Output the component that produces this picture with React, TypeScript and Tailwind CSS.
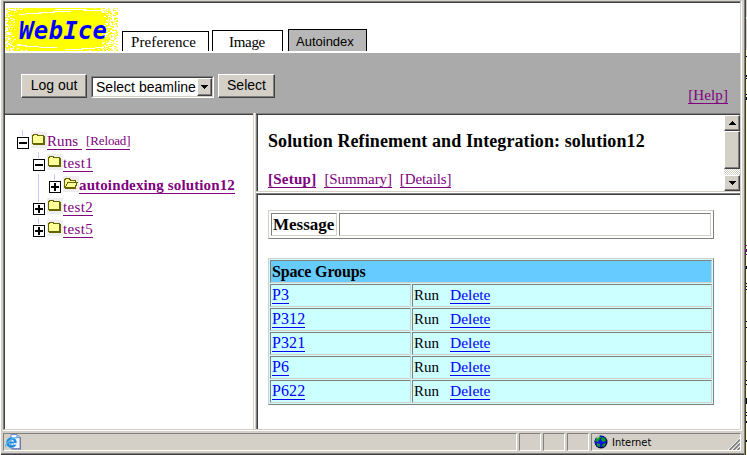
import React from "react";

const serif = "font-['Liberation_Serif',serif]";
const sans = "font-['Liberation_Sans',sans-serif]";

const edgeMarks = [
  { y: 56, h: 1, c: "#000" }, { y: 75, h: 2, c: "#000" }, { y: 78, h: 1, c: "#000" },
  { y: 94, h: 1, c: "#000" }, { y: 97, h: 3, c: "#000" },
  { y: 245, h: 1, c: "#800080" }, { y: 249, h: 3, c: "#800080" }, { y: 254, h: 1, c: "#800080" },
  { y: 266, h: 3, c: "#000" }, { y: 283, h: 1, c: "#000" }, { y: 286, h: 1, c: "#000" },
  { y: 289, h: 1, c: "#000" }, { y: 321, h: 1, c: "#000" }, { y: 327, h: 1, c: "#000" },
  { y: 361, h: 1, c: "#000" }, { y: 380, h: 1, c: "#000" }, { y: 384, h: 1, c: "#000" },
  { y: 398, h: 6, c: "#000" }, { y: 412, h: 1, c: "#000" }, { y: 415, h: 1, c: "#000" },
  { y: 421, h: 2, c: "#000" }, { y: 440, h: 2, c: "#000" },
];

function speckles() {
  let seed = 7;
  const rnd = () => {
    seed = (seed * 16807) % 2147483647;
    return seed / 2147483647;
  };
  const out: { x: number; y: number; w: number }[] = [];
  for (let y = 0; y < 43; y++) {
    for (let x = 0; x < 113; x++) {
      const nx = Math.abs(x - 53) / 58;
      const ny = Math.abs(y - 21) / 22;
      const r = Math.pow(nx, 5) + Math.pow(ny, 8) * 0.3;
      if (r > 0.25 && rnd() < Math.min(0.62, r * 0.8)) out.push({ x, y, w: rnd() > 0.7 ? 2 : 1 });
    }
  }
  return out;
}
const dots = speckles();

function Logo() {
  return (
    <svg width="113" height="43" viewBox="0 0 113 43" shapeRendering="crispEdges" className="mt-[5px] shrink-0">
      <rect width="113" height="43" fill="#ff0" />
      {dots.map((d, i) => <rect key={i} x={d.x} y={d.y} width={d.w} height="1" fill="#fff" />)}
      <path d="M14 6h6V5h14V4h14V3h18v1H50v1H36v1H20v1h-6zM50 1h32v1h14v1H78V2H50zM12 36h4v1h6v1h12v1h18v1H34v-1H20v-1h-8zM60 41h16v-1h14v-1h8v1h-8v1H78v1H60z" fill="#fff" />
      <text x="14" y="31" fill="#00f" fontSize="24" fontWeight="700" fontStyle="italic" fontFamily="'DejaVu Sans Mono', monospace" textLength="88">WebIce</text>
    </svg>
  );
}

function Folder({ open }: { open?: boolean }) {
  return (
    <svg width="16" height="16" viewBox="0 0 16 16" className="ml-[2px] mt-[2px] shrink-0" shapeRendering="crispEdges">
      <rect width="16" height="16" fill="#eeeeee" />
      {open ? (
        <>
          <path d="M1 3h1V2h5v1h1v1h5v2h2v1h-1v3h-1v3H2v-1H1z" fill="#666600" />
          <path d="M2 4h1V3h3v1h1v1h5v1H4v2H3v2H2z" fill="#ffff99" />
          <path d="M5 7h8v2h-1v2H3v-1h1V8h1z" fill="#ffff99" />
        </>
      ) : (
        <>
          <path d="M1 3h1V2h5v1h6v1h1v9H2v-1H1z" fill="#666600" />
          <path d="M2 4h1V3h3v1h6v7H2z" fill="#ffff99" />
        </>
      )}
    </svg>
  );
}

function TreeRow({ guides, open, plus, children }: { guides: boolean[]; open?: boolean; plus?: boolean; children: React.ReactNode }) {
  return (
    <div className="flex h-[22px] pl-[12px]">
      {guides.map((g, i) => (
        <div key={i} className="w-[16px] shrink-0 pl-[5px]">
          {g && <div className="h-full w-px bg-[#c8c8ff]" />}
        </div>
      ))}
      <div className="w-[12px] shrink-0">
        <div className="ml-[5px] h-[6px] w-px bg-[#c8c8ff]" />
        <svg width="12" height="12" viewBox="0 0 12 12" className="mt-px" shapeRendering="crispEdges">
          <rect width="12" height="12" fill="#000" />
          <rect x="1" y="1" width="10" height="10" fill="#fff" />
          <path d={plus ? "M2 5h3V2h2v3h3v2H7v3H5V7H2z" : "M2 5h8v2H2z"} fill="#000" />
        </svg>
      </div>
      <Folder open={open} />
      <div className="flex items-start whitespace-pre pt-[3px] leading-[18px] text-[#800080]">{children}</div>
    </div>
  );
}

const u = "border-b border-current leading-[16px] h-[17px] whitespace-pre";
const raised = "border border-t-white border-l-white border-r-[#404040] border-b-[#404040] bg-[#d4d0c8]";
const sunk = "border border-t-[#808080] border-l-[#808080] border-r-[#d4d0c8] border-b-[#d4d0c8]";
const panel = "h-[18px] border border-t-[#808080] border-l-[#808080] border-r-white border-b-white";

function Arrow({ up }: { up?: boolean }) {
  return (
    <svg width="7" height="4" viewBox="0 0 7 4" shapeRendering="crispEdges">
      <path d={up ? "M3 0h1v1h1v1h1v1h1v1H0V3h1V2h1V1h1z" : "M0 0h7v1H6v1H5v1H4v1H3V3H2V2H1V1H0z"} />
    </svg>
  );
}

function Button({ children, className }: { children: React.ReactNode; className: string }) {
  return (
    <button className={`${raised} ${className} h-[24px] shadow-[inset_-1px_-1px_0_#808080] ${sans} text-[14px] leading-[21px] flex justify-center`}>
      {children}
    </button>
  );
}

function Header() {
  return (
    <header className="flex h-[112px] flex-col">
      <div className="flex h-[50px] items-start">
        <Logo />
        <div className="ml-[4px] mt-[28px] h-[20px] w-[87px] border border-b-0 border-black pl-[8px] text-[15px] leading-[21px] tracking-[0.1px]">Preference</div>
        <div className="ml-[3px] mt-[27px] h-[21px] w-[71px] border border-b-0 border-black pl-[16px] text-[15px] leading-[22px] tracking-[-0.3px]">Image</div>
        <div className={`ml-[5px] mt-[26px] h-[22px] w-[79px] border border-b-0 border-black bg-[#b7b7b7] pl-[7px] text-[13px] leading-[23px] tracking-[0px] ${sans}`}>Autoindex</div>
      </div>
      <div className="flex h-[60px] items-start bg-[#aaaaaa] pl-[16px] pr-[12px]">
        <Button className="mt-[21px] w-[66px]">Log out</Button>
        <div className={`ml-[4px] mt-[23px] flex h-[22px] w-[123px] border border-b-white border-l-[#808080] border-r-white border-t-[#808080] bg-white ${sans}`}>
          <div className="flex w-full justify-between border border-b-[#d4d0c8] border-l-[#404040] border-r-[#d4d0c8] border-t-[#404040] pl-[3px] text-[14px] leading-[19px] tracking-[0.02px]">
            <span className="whitespace-nowrap">Select beamline</span>
            <span className={`${raised} flex h-full w-[15px] shrink-0 items-center justify-center shadow-[inset_-1px_-1px_0_#808080]`}><Arrow /></span>
          </div>
        </div>
        <Button className="ml-[4px] mt-[21px] w-[57px]">Select</Button>
        <a className={`${u} ml-auto mt-[34px] text-[15px] tracking-[0.1px] text-[#800080]`}>[Help]</a>
      </div>
      <div className="h-px bg-[#808080]" />
      <div className="h-px bg-[#404040]" />
    </header>
  );
}

function Scrollbar() {
  return (
    <div className="flex w-[16px] shrink-0 flex-col bg-[repeating-conic-gradient(#fff_0_25%,#d4d0c8_0_50%)] bg-[length:2px_2px]">
      <div className={`${raised} flex h-[16px] items-center justify-center shadow-[inset_-1px_-1px_0_#808080]`}><Arrow up /></div>
      <div className={`${raised} h-[38px] shadow-[inset_-1px_-1px_0_#808080]`} />
      <div className={`${raised} mt-auto flex h-[16px] items-center justify-center shadow-[inset_-1px_-1px_0_#808080]`}><Arrow /></div>
    </div>
  );
}

function StatusBar() {
  return (
    <footer className="flex h-[18px] gap-[2px] bg-[#d4d0c8]">
      <div className={`${panel} w-[514px] pl-px`}>
        <svg width="17" height="16" viewBox="0 0 17 16">
          <path d="M7 1h6l3 3v11.5H7z" fill="#666b80" />
          <path d="M6 .5h6l3 3v11H6z" fill="#f2f6ff" stroke="#718fc8" />
          <path d="M12 .5v3h3" fill="#bdd2f5" stroke="#718fc8" />
          <circle cx="6.5" cy="8.5" r="4" fill="none" stroke="#218ce0" strokeWidth="2.5" />
          <path d="M4 8.5h7" stroke="#218ce0" strokeWidth="1.8" />
          <path d="M9 9.8h4" stroke="#f2f6ff" strokeWidth="1.5" />
          <path d="M1 13C-.5 10 8 2 12.5 4" stroke="#54b8f3" strokeWidth="1.3" fill="none" />
        </svg>
      </div>
      <div className={`${panel} w-[22px]`} />
      <div className={`${panel} w-[22px]`} />
      <div className={`${panel} w-[22px]`} />
      <div className={`${panel} flex grow items-center pl-[2px]`}>
        <svg width="14" height="14" viewBox="0 0 14 14" className="shrink-0">
          <circle cx="7" cy="7" r="6.5" fill="#000050" />
          <circle cx="6.5" cy="6.5" r="5.8" fill="#1010d8" />
          <path d="M3 2l3-1 1 2-2 2-1 2-3-1zM8 2l3 1 1 3-3 1-2-2zM3 8l3 1v3L3 11zM9 9l3-1-2 4-2-1z" fill="#08a020" />
          <path d="M2 3l2-2 2 .5-3 2z" fill="#d5d5d5" />
        </svg>
        <span className="ml-[4px] mt-px font-['DejaVu_Sans_Condensed','DejaVu_Sans',sans-serif] text-[11px] font-normal leading-[14px] tracking-[0px]">Internet</span>
        <svg width="12" height="12" viewBox="0 0 12 12" className="ml-auto mt-[4px]">
          <path d="M0 12L12 0M4 12l8-8M8 12l4-4" stroke="#fff" />
          <path d="M1.5 12L12 1.5M5.5 12L12 5.5M9.5 12L12 9.5" stroke="#808080" strokeWidth="1.7" />
        </svg>
      </div>
    </footer>
  );
}

export default function App() {
  return (
    <div className={`flex h-[455px] w-[747px] overflow-hidden bg-[#d4d0c8] text-black ${serif}`}>
      <div className="w-px bg-white" />
      <div className="flex w-[743px] flex-col pt-px">
        <div className="ml-[2px] mr-[2px] flex h-[430px] border-b border-r border-white">
          <div className="flex w-full flex-col border-b border-l border-r border-t border-b-[#d4d0c8] border-l-[#808080] border-r-[#d4d0c8] border-t-[#808080]">
            <div className="flex h-full flex-col border-l border-t border-[#404040] bg-white">
              <Header />
              <div className="flex grow">
                <nav className="w-[248px] pt-[15px] text-[15px]">
                  <TreeRow guides={[]}>
                    <a className={`${u} tracking-[0.1px]`}>Runs </a>
                    <a className={`${u} ml-[4px] text-[13px] tracking-[-0.15px]`}>[Reload]</a>
                  </TreeRow>
                  <TreeRow guides={[false]}><a className={`${u} tracking-[0.35px]`}>test1</a></TreeRow>
                  <TreeRow guides={[false, true]} plus open><a className={`${u} font-bold tracking-[0.13px]`}>autoindexing solution12</a></TreeRow>
                  <TreeRow guides={[false]} plus><a className={`${u} tracking-[0.35px]`}>test2</a></TreeRow>
                  <TreeRow guides={[false]} plus><a className={`${u} tracking-[0.35px]`}>test5</a></TreeRow>
                </nav>
                <div className="-mt-[2px] flex w-[3px] border-l border-r border-[#d4d0c8] bg-white" />
                <div className="flex w-[484px] flex-col">
                  <div className="flex h-[76px] border-l border-[#808080]">
                    <div className="flex grow border-l border-[#404040]">
                      <div className="grow pl-[10px]">
                        <h1 className="mt-[16px] whitespace-nowrap text-[18px] font-bold leading-[20px] tracking-[0.1px]">Solution Refinement and Integration: solution12</h1>
                        <div className="mt-[20px] flex text-[15px] text-[#800080]">
                          <a className={`${u} font-bold tracking-[0.25px]`}>[Setup]</a>
                          <a className={`${u} ml-[8px] tracking-[-0.1px]`}>[Summary]</a>
                          <a className={`${u} ml-[8px] tracking-[-0.1px]`}>[Details]</a>
                        </div>
                      </div>
                      <Scrollbar />
                    </div>
                  </div>
                  <div className="h-[2px] border-t border-[#d4d0c8] bg-white" />
                  <div className="flex grow border-l border-t border-[#808080]">
                    <div className="grow border-l border-t border-[#404040] pl-[10px] pt-[15px]">
                      <div className="flex h-[29px] w-[446px] gap-[2px] border border-b-[#808080] border-l-[#d4d0c8] border-r-[#808080] border-t-[#d4d0c8] p-[2px]">
                        <div className={`${sunk} w-[66px] pl-px text-[17px] font-bold leading-[22px]`}>Message</div>
                        <div className={`${sunk} grow`} />
                      </div>
                      <div className="mt-[19px] grid w-[446px] grid-cols-[141px_1fr] gap-px border border-b-[#808080] border-l-[#d4d0c8] border-r-[#808080] border-t-[#d4d0c8] bg-[#ccffff] p-px text-[16px]">
                        <div className={`${sunk} col-span-2 h-[23px] bg-[#66ccff] pl-px font-bold leading-[22px] tracking-[-0.15px]`}>Space Groups</div>
                        {["P3", "P312", "P321", "P6", "P622"].map((name) => (
                          <React.Fragment key={name}>
                            <div className={`${sunk} flex h-[23px] pl-px pt-[2px] text-[#0000ff]`}><a className={`${u} tracking-[0.1px]`}>{name}</a></div>
                            <div className={`${sunk} flex h-[23px] pl-px pt-[2px]`}>
                              <span className="w-[36px] text-[15px] leading-[17px]">Run</span>
                              <a className={`${u} text-[15.5px] text-[#0000ff]`}>Delete</a>
                            </div>
                          </React.Fragment>
                        ))}
                      </div>
                    </div>
                  </div>
                </div>
              </div>
            </div>
          </div>
        </div>
        <div className="ml-[2px] mr-[3px] mt-[2px]"><StatusBar /></div>
        <div className="mt-[2px] h-px bg-[#808080]" />
        <div className="h-px bg-[#404040]" />
      </div>
      <div className="w-px bg-[#808080]" />
      <div className="w-px bg-[#404040]" />
      <svg width="1" height="455" shapeRendering="crispEdges">
        <rect width="1" height="50" fill="#d4d0c8" />
        <rect y="17" width="1" height="2" fill="#fff" />
        <rect y="50" width="1" height="405" fill="#ffffcc" />
        {edgeMarks.map((m) => <rect key={m.y} y={m.y} width="1" height={m.h} fill={m.c} />)}
      </svg>
    </div>
  );
}
